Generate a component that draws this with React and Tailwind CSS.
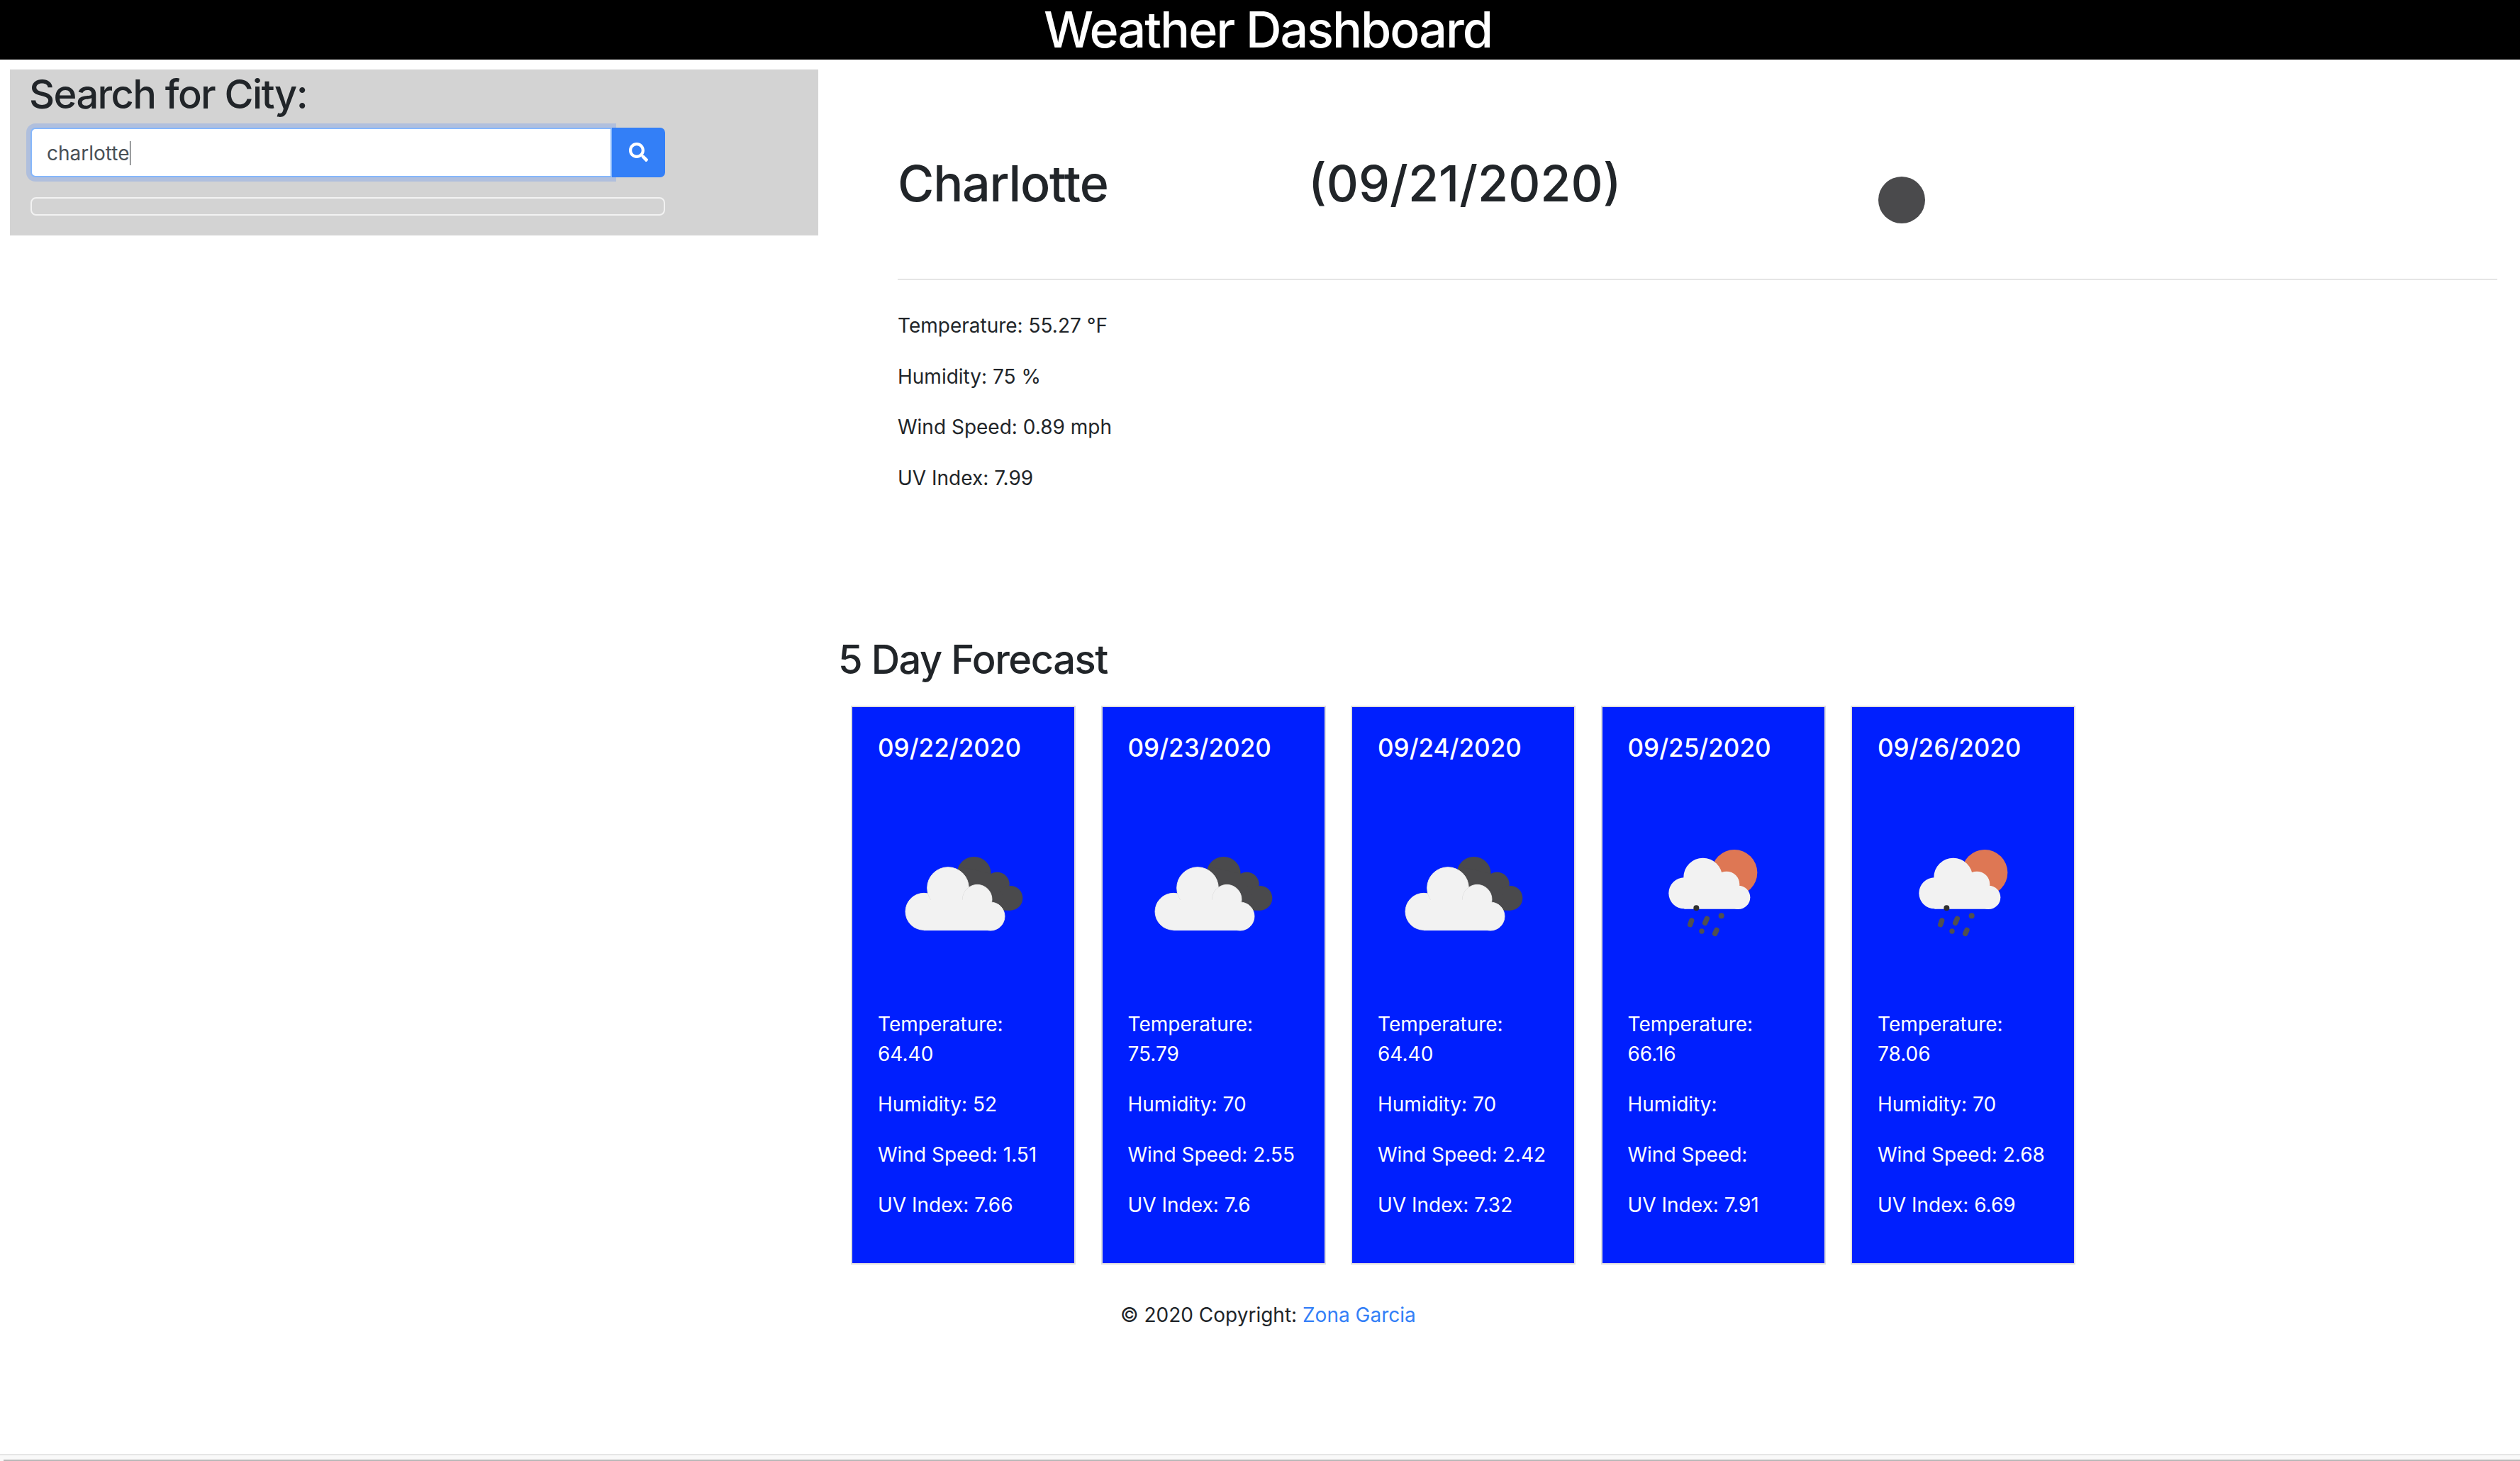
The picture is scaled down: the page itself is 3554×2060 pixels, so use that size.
import React from 'react';
import { FaSearch } from 'react-icons/fa';

const font = { fontFamily: 'Inter, "Liberation Sans", sans-serif' };

const forecast = [
  { date: '09/22/2020', icon: 'cloud', temp: '64.40', humidity: '52', wind: '1.51', uv: '7.66' },
  { date: '09/23/2020', icon: 'cloud', temp: '75.79', humidity: '70', wind: '2.55', uv: '7.6' },
  { date: '09/24/2020', icon: 'cloud', temp: '64.40', humidity: '70', wind: '2.42', uv: '7.32' },
  { date: '09/25/2020', icon: 'rain', temp: '66.16', humidity: '', wind: '', uv: '7.91' },
  { date: '09/26/2020', icon: 'rain', temp: '78.06', humidity: '70', wind: '2.68', uv: '6.69' },
];

const CloudIcon = () => (
  <svg viewBox="0 0 720 540" className="w-[240px] h-[180px]">
    <g transform="translate(6 0)">
      <g fill="#4a4a4c">
        <circle cx="398" cy="180" r="72" />
        <circle cx="496" cy="225" r="52" />
        <circle cx="552" cy="283" r="52" />
        <path d="M340 150 L470 180 L552 335 L480 335 Z" />
      </g>
      <g fill="#f2f2f2" stroke="#d9d9d9" strokeWidth="3" paintOrder="stroke">
        <circle cx="186" cy="340" r="78" />
        <circle cx="288" cy="240" r="88" />
        <circle cx="412" cy="288" r="62" />
        <circle cx="468" cy="360" r="60" />
      </g>
      <path d="M186 290 H468 V420 H186 Z" fill="#f2f2f2" />
    </g>
  </svg>
);

const RainIcon = () => (
  <svg viewBox="0 0 720 540" className="w-[240px] h-[180px]">
    <g transform="translate(132 0)">
      <circle cx="318" cy="175" r="97" fill="#de7754" />
      <g fill="#f2f2f2">
        <circle cx="106" cy="262" r="66" />
        <circle cx="185" cy="195" r="82" />
        <circle cx="285" cy="225" r="55" />
        <circle cx="335" cy="280" r="50" />
        <path d="M106 230 H335 V329 H106 Z" />
      </g>
      <circle cx="157" cy="325" r="12" fill="#2f2f2f" />
      <g stroke="#505050" strokeWidth="22" strokeLinecap="round">
        <path d="M137 378 L131 395" />
        <path d="M202 370 L194 388" />
        <path d="M243 418 L236 433" />
      </g>
      <circle cx="263" cy="358" r="12" fill="#505050" />
      <circle cx="180" cy="423" r="11" fill="#505050" />
    </g>
  </svg>
);

const ForecastCard = ({ day }) => (
  <div className="w-[317px] h-[788px] flex-none bg-[#001ffe] text-white border-2 border-[#dfdfdf] px-[36px] pt-[36px]">
    <h5 className="text-[35px] leading-[42px] font-medium whitespace-nowrap mb-[21px]">{day.date}</h5>
    <div className="h-[327px] pt-[5px] flex items-center justify-center">
      {day.icon === 'cloud' ? <CloudIcon /> : <RainIcon />}
    </div>
    <div className="text-[28px] leading-[42px] flex flex-col gap-[29px]">
      <p>Temperature:<br />{day.temp}</p>
      <p>Humidity: {day.humidity}</p>
      <p className="whitespace-nowrap">Wind Speed: {day.wind}</p>
      <p>UV Index: {day.uv}</p>
    </div>
  </div>
);

export default function App() {
  return (
    <div style={font} className="min-h-[2060px] bg-white text-[#212529] flex flex-col">
      <header className="h-[84px] bg-black text-white flex items-center justify-center pl-[22px]">
        <h1 className="text-[70px] leading-[84px] font-medium tracking-[-2px]">Weather Dashboard</h1>
      </header>

      <div className="flex flex-1 items-start">
        {/* Search */}
        <aside className="ml-[14px] mt-[14px] w-[1140px] h-[234px] flex-none bg-[#d3d3d3] pl-[29px] pt-[6px]">
          <h3 className="-ml-[2px] text-[56px] leading-[59px] font-medium tracking-[-1.6px]">Search for City:</h3>
          <div className="flex w-[895px] mt-[17px] h-[70px]">
            <div className="flex-1 bg-white border-2 border-[#86b7fb] rounded-l-[7px] shadow-[0_0_0_6px_#b0bfdd] flex items-center pl-[21px] pt-[2px] text-[28px] text-[#495057]">
              <span className="border-r border-[#212529] leading-[34px]">charlotte</span>
            </div>
            <button className="relative w-[75px] bg-[#337ff7] rounded-r-[7px] flex items-center justify-center text-white">
              <FaSearch className="w-[27px] h-[27px] -translate-y-[1px]" />
            </button>
          </div>
          <div className="w-[895px] h-[26px] mt-[28px] border-2 border-[#f2f2f2] rounded-[8px]" />
        </aside>

        {/* Current weather and forecast */}
        <main className="ml-[28px] flex-1 min-w-0">
          <section className="pl-[84px] pr-[32px]">
            <div className="flex items-start pt-[133px] h-[311px] border-b-2 border-[#e5e5e5]">
              <h1 className="w-[579px] text-[70px] leading-[84px] font-medium tracking-[-1.2px]">Charlotte</h1>
              <h1 className="w-[804px] text-[70px] leading-[84px] font-medium">(09/21/2020)</h1>
              <div className="w-[66px] h-[66px] mt-[32px] rounded-full bg-[#4a4a4c]" />
            </div>
            <div className="text-[28px] leading-[42px] flex flex-col gap-[29.5px] pt-[43px]">
              <p>Temperature: 55.27 °F</p>
              <p>Humidity: 75 %</p>
              <p>Wind Speed: 0.89 mph</p>
              <p>UV Index: 7.99</p>
            </div>
          </section>

          <h3 className="text-[56px] leading-[59px] font-medium tracking-[-1.45px] mt-[206px]">5 Day Forecast</h3>
          <div className="flex gap-[35.5px] pl-[18px] mt-[35px]">
            {forecast.map((day) => <ForecastCard key={day.date} day={day} />)}
          </div>

          <footer className="mt-[50px] pl-[398px] text-[28px] leading-[42px]">
            © 2020 Copyright: <a href="#" className="text-[#337ff7]">Zona Garcia</a>
          </footer>
        </main>
      </div>

      <div className="h-[10px] flex flex-col justify-end border-t-2 border-[#e6e6e6] bg-[#f9f9f9]">
        <div className="h-[2px] ml-[5px] bg-[#b8b8b8]" />
      </div>
    </div>
  );
}
